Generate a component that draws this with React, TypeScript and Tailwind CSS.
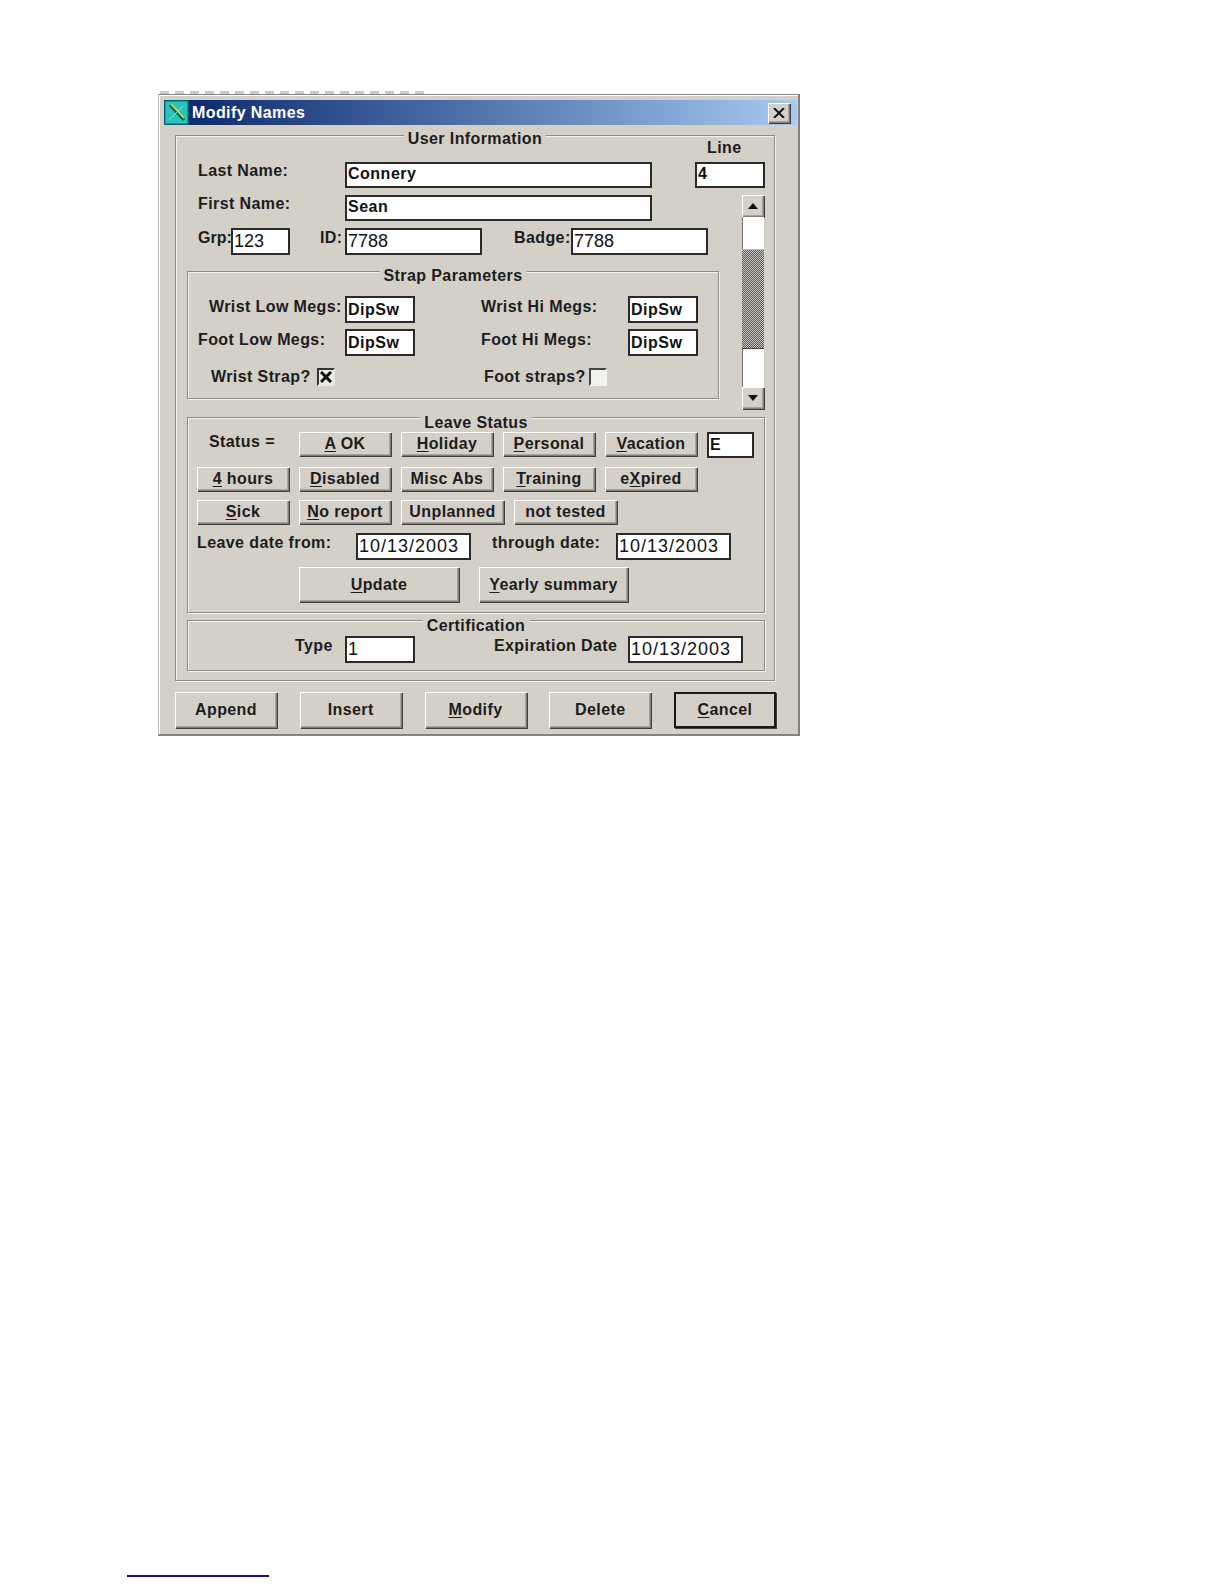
const raised = 'bg-[#d4d0c8] shadow-[inset_1px_1px_0_#fff,inset_-1px_-1px_0_#807d78,inset_-2px_-2px_0_#a8a59e,1px_1px_0_#403f3c]'
const etched = 'border border-[#8d8b85] shadow-[inset_1px_1px_0_#f4f2ee,1px_1px_0_#f4f2ee]'

function Box({ value, w, h = 'h-[27px]', num, date, extra = '' }: { value: string; w: string; h?: string; num?: boolean; date?: boolean; extra?: string }) {
  return (
    <input
      readOnly
      value={value}
      className={`${w} ${h} ${extra} shrink-0 border-2 border-[#2a2a2a] bg-white pl-[1px] text-[#111] outline-none ${date ? 'text-[18px] font-normal tracking-[1px]' : num ? 'text-[18px] font-normal' : 'text-[16px] font-bold tracking-[0.5px]'}`}
    />
  )
}

function Label({ children, className = '' }: { children: React.ReactNode; className?: string }) {
  return <span className={`shrink-0 whitespace-nowrap text-[16px] font-bold leading-[18px] tracking-[0.4px] text-[#1c1c1c] ${className}`}>{children}</span>
}

function Legend({ children, className }: { children: React.ReactNode; className: string }) {
  return (
    <span className={`absolute left-1/2 -translate-x-1/2 whitespace-nowrap bg-[#d4d0c8] px-[4px] text-[16px] font-bold leading-[18px] tracking-[0.4px] text-[#1c1c1c] ${className}`}>
      {children}
    </span>
  )
}

function Btn({ k, rest, pre = '', w = 'w-[92px]', h = 'h-[24px]', extra = '' }: { k?: string; rest: string; pre?: string; w?: string; h?: string; extra?: string }) {
  return (
    <button className={`${raised} ${w} ${h} ${extra} shrink-0 whitespace-nowrap text-center text-[16px] font-bold leading-none tracking-[0.4px] text-[#1c1c1c]`}>
      {pre}
      {k && <span className="underline underline-offset-2">{k}</span>}
      {rest}
    </button>
  )
}

function Arrow({ down }: { down?: boolean }) {
  return (
    <div className={`${raised} flex h-[22px] w-[22px] items-center justify-center`}>
      <svg width="10" height="6" viewBox="0 0 10 6">
        <path d={down ? 'M0 0h10L5 6z' : 'M0 6h10L5 0z'} fill="#111" />
      </svg>
    </div>
  )
}

function Scrollbar() {
  return (
    <div className="ml-[23px] flex w-[22px] flex-col">
      <Arrow />
      <div className="h-[33px] bg-white shadow-[inset_0_-1px_0_#bbb,inset_1px_0_0_#777]" />
      <div className="h-[98px] bg-[repeating-conic-gradient(#5c5c5a_0_25%,#c4c2bc_0_50%)] bg-[length:2px_2px]" />
      <div className="h-[39px] border-t border-[#444] bg-white shadow-[inset_1px_0_0_#777]" />
      <Arrow down />
    </div>
  )
}

export default function App() {
  return (
    <div className="h-[1584px] w-[1224px] overflow-hidden bg-white pt-[91px] font-['Liberation_Sans',Arial,sans-serif]">
      <div className="ml-[160px] h-[3px] w-[265px] bg-[repeating-linear-gradient(90deg,#c9c9c9_0_9px,transparent_9px_15px)]" />

      {/* dialog */}
      <div className="ml-[158px] box-border h-[642px] w-[642px] border border-b-2 border-r-2 border-[#84827c] border-l-[#bdbab3] bg-[#d4d0c8] pl-[5px] pt-[5px] shadow-[inset_1px_1px_0_#fff]">
        <div className="flex h-[25px] w-[633px] items-center bg-gradient-to-r from-[#0a246a] to-[#a6caf0]">
          <svg className="shrink-0" width="25" height="25" viewBox="0 0 25 25">
            <rect width="25" height="25" fill="#0d5f78" />
            <rect x="1.5" y="1.5" width="22" height="22" fill="#27c4bc" />
            <path d="M6 5l14 15" stroke="#24604a" strokeWidth="3" />
            <path d="M7 4l13 14" stroke="#d8d84a" strokeWidth="1.5" />
            <path d="M5 20L19 6" stroke="#7fe8e0" strokeWidth="1" />
          </svg>
          <span className="ml-[3px] text-[16px] font-bold tracking-[0.4px] text-white">Modify Names</span>
          <div className={`${raised} ml-auto mr-[7px] flex h-[20px] w-[22px] items-center justify-center`}>
            <svg width="12" height="10" viewBox="0 0 12 10">
              <path d="M1 0l10 10M11 0L1 10" stroke="#111" strokeWidth="2" />
            </svg>
          </div>
        </div>

        {/* outer group */}
        <div className={`${etched} relative ml-[11px] mt-[10px] box-border h-[546px] w-[600px] pl-[11px]`}>
          <Legend className="-top-[6px]">User Information</Legend>

          <div className="flex h-[26px] items-end pb-[5px] pl-[520px]">
            <Label>Line</Label>
          </div>
          <div className="flex items-start">
            <Label className="ml-[11px] w-[147px]">Last Name:</Label>
            <Box value="Connery" w="w-[307px]" h="h-[26px]" extra="pb-[2px]" />
            <div className="ml-[43px]">
              <Box value="4" w="w-[70px]" h="h-[26px]" extra="pb-[2px]" />
            </div>
          </div>

          <div className="mt-[7px] flex items-start">
            <div className="w-[532px]">
              <div className="flex items-start">
                <Label className="ml-[11px] w-[147px]">First Name:</Label>
                <Box value="Sean" w="w-[307px]" h="h-[26px]" extra="pb-[2px]" />
              </div>
              <div className="mt-[7px] flex items-start">
                <Label className="ml-[11px] mt-[1px] w-[33px] tracking-normal">Grp:</Label>
                <Box value="123" w="w-[59px]" num />
                <Label className="ml-[30px] mt-[1px] w-[25px]">ID:</Label>
                <Box value="7788" w="w-[137px]" num />
                <Label className="ml-[32px] mt-[1px] w-[57px]">Badge:</Label>
                <Box value="7788" w="w-[137px]" num />
              </div>

              <div className={`${etched} relative mt-[16px] box-border h-[128px] w-[532px] pt-[24px]`}>
                <Legend className="-top-[5px]">Strap Parameters</Legend>
                <div className="flex items-start">
                  <Label className="mt-[2px] w-[157px] pl-[21px]">Wrist Low Megs:</Label>
                  <Box value="DipSw" w="w-[70px]" />
                  <Label className="ml-[66px] mt-[2px] w-[147px]">Wrist Hi Megs:</Label>
                  <Box value="DipSw" w="w-[70px]" />
                </div>
                <div className="mt-[6px] flex items-start">
                  <Label className="mt-[2px] w-[157px] pl-[10px]">Foot Low Megs:</Label>
                  <Box value="DipSw" w="w-[70px]" />
                  <Label className="ml-[66px] mt-[2px] w-[147px]">Foot Hi Megs:</Label>
                  <Box value="DipSw" w="w-[70px]" />
                </div>
                <div className="mt-[12px] flex h-[18px] items-center">
                  <Label className="w-[129px] pl-[23px]">Wrist Strap?</Label>
                  <div className="flex h-[18px] w-[18px] items-center justify-center border-2 border-b-[#e8e6e0] border-l-[#333] border-r-[#e8e6e0] border-t-[#333] bg-[#ecebe6]">
                    <svg width="12" height="12" viewBox="0 0 12 12">
                      <path d="M1 1l10 10M11 1L1 11" stroke="#111" strokeWidth="3" />
                    </svg>
                  </div>
                  <Label className="ml-[149px] w-[105px]">Foot straps?</Label>
                  <div className="h-[18px] w-[18px] border-2 border-b-[#f4f2ee] border-l-[#444] border-r-[#f4f2ee] border-t-[#444] bg-[#f2f1ed]" />
                </div>
              </div>
            </div>
            <Scrollbar />
          </div>

          {/* leave status */}
          <div className={`${etched} relative mt-[8px] box-border h-[196px] w-[578px] pl-[9px] pt-[14px]`}>
            <Legend className="-top-[4px]">Leave Status</Legend>
            <div className="flex items-start gap-[10px]">
              <Label className="-mr-[10px] mt-[1px] w-[102px] pl-[12px]">Status =</Label>
              <Btn k="A" rest=" OK" />
              <Btn k="H" rest="oliday" />
              <Btn k="P" rest="ersonal" />
              <Btn k="V" rest="acation" />
              <Box value="E" w="w-[47px]" h="h-[26px]" />
            </div>
            <div className="mt-[9px] flex gap-[10px]">
              <Btn k="4" rest=" hours" />
              <Btn k="D" rest="isabled" />
              <Btn rest="Misc Abs" />
              <Btn k="T" rest="raining" />
              <Btn pre="e" k="X" rest="pired" />
            </div>
            <div className="mt-[9px] flex gap-[10px]">
              <Btn k="S" rest="ick" />
              <Btn k="N" rest="o report" />
              <Btn rest="Unplanned" w="w-[103px]" />
              <Btn rest="not tested" w="w-[103px]" />
            </div>
            <div className="mt-[9px] flex items-start">
              <Label className="mt-[1px] w-[159px]">Leave date from:</Label>
              <Box value="10/13/2003" w="w-[115px]" date />
              <Label className="ml-[21px] mt-[1px] w-[124px]">through date:</Label>
              <Box value="10/13/2003" w="w-[115px]" date />
            </div>
            <div className="ml-[102px] mt-[7px] flex gap-[20px]">
              <Btn k="U" rest="pdate" w="w-[160px]" h="h-[35px]" />
              <Btn k="Y" rest="early summary" w="w-[149px]" h="h-[35px]" />
            </div>
          </div>

          {/* certification */}
          <div className={`${etched} relative mt-[7px] box-border h-[51px] w-[578px]`}>
            <Legend className="-top-[4px]">Certification</Legend>
            <div className="flex items-start pt-[15px]">
              <Label className="ml-[107px] mt-[1px] w-[50px]">Type</Label>
              <Box value="1" w="w-[70px]" num />
              <Label className="ml-[79px] mt-[1px] w-[134px]">Expiration Date</Label>
              <Box value="10/13/2003" w="w-[115px]" date />
            </div>
          </div>
        </div>

        {/* bottom buttons */}
        <div className="ml-[11px] mt-[11px] flex w-[601px] justify-between">
          <Btn rest="Append" w="w-[102px]" h="h-[36px]" />
          <Btn rest="Insert" w="w-[102px]" h="h-[36px]" />
          <Btn k="M" rest="odify" w="w-[102px]" h="h-[36px]" />
          <Btn rest="Delete" w="w-[102px]" h="h-[36px]" />
          <Btn k="C" rest="ancel" w="w-[102px]" h="h-[36px]" extra="outline outline-2 -outline-offset-2 outline-[#1a1a1a]" />
        </div>
      </div>

      <div className="ml-[127px] mt-[839px] h-[2px] w-[142px] bg-[#1a0f8a]" />
    </div>
  )
}
